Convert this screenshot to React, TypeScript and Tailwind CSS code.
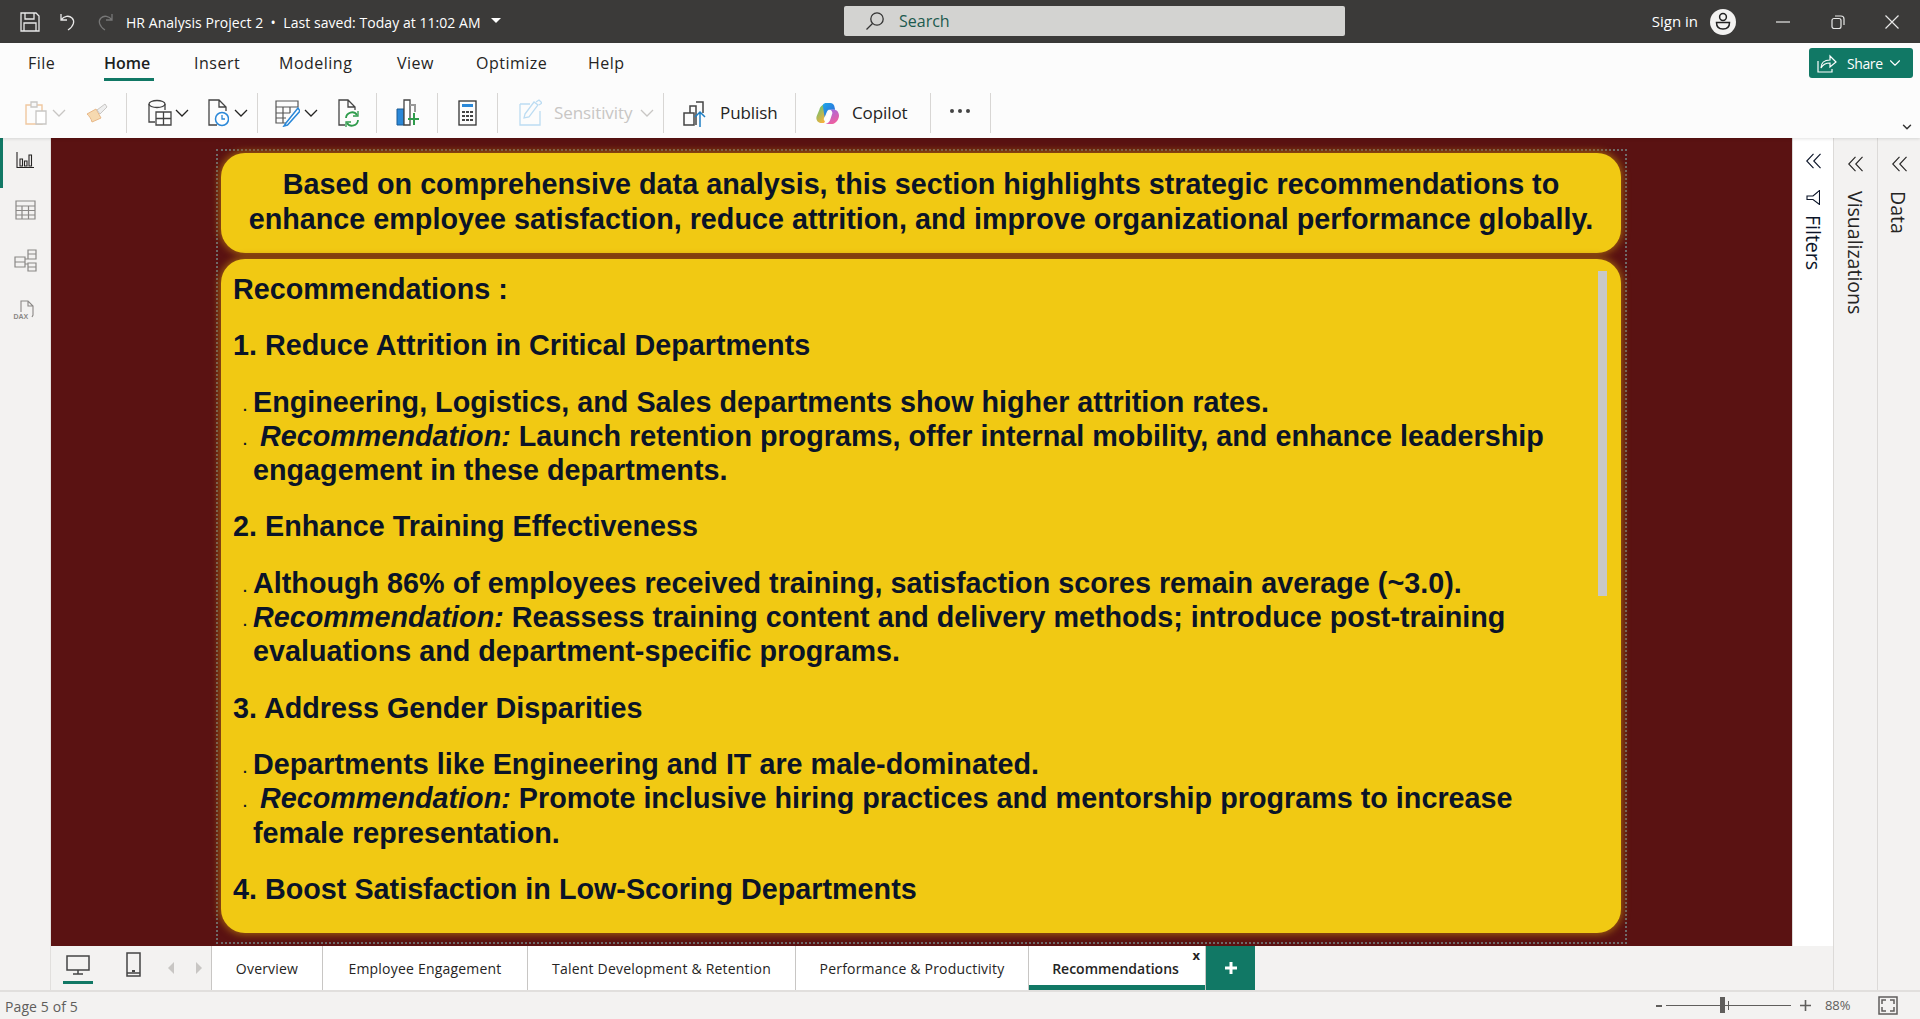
import { ChevronDown } from "lucide-react";

const uiFont = "font-['Open_Sans',sans-serif]";

function Sep({ className = "" }: { className?: string }) {
  return <div className={`w-px h-10 bg-[#d8d6d4] shrink-0 ${className}`} />;
}

function Chev({ className = "", muted = false }: { className?: string; muted?: boolean }) {
  return (
    <svg viewBox="0 0 14 8" className={`w-[14px] h-2 shrink-0 ${className}`} fill="none" stroke={muted ? "#c8c6c4" : "#252423"} strokeWidth="1.3">
      <path d="M1 1l6 6 6-6" />
    </svg>
  );
}

function TitleBar() {
  return (
    <div className="h-[43px] bg-[#3b3a39] flex items-center text-white shrink-0 relative">
      <svg viewBox="0 0 20 20" className="w-5 h-5 ml-5" fill="none" stroke="#e8e8e8" strokeWidth="1.3">
        <path d="M1 1h15l3 3v15H1z" />
        <path d="M5 1v6h9V1M4 19v-8h12v8" />
      </svg>
      <svg viewBox="0 0 18 20" className="w-[18px] h-5 ml-[19px]" fill="none" stroke="#e8e8e8" strokeWidth="1.3">
        <path d="M2 2v6h6M2 8c3-4 8-5 11-2s2 8-4 12" />
      </svg>
      <svg viewBox="0 0 18 20" className="w-[18px] h-5 ml-[19px]" fill="none" stroke="#777" strokeWidth="1.3">
        <path d="M16 2v6h-6M16 8c-3-4-8-5-11-2s-2 8 4 12" />
      </svg>
      <span className={`${uiFont} text-[14px] ml-[12px] mt-[2px] tracking-[0.05px] whitespace-nowrap`}>
        HR Analysis Project 2 &nbsp;•&nbsp; Last saved: Today at 11:02 AM
      </span>
      <svg viewBox="0 0 10 5" className="w-[10px] h-[5px] ml-[10px] mb-[2px]" fill="#fff">
        <path d="M0 0h10L5 5z" />
      </svg>
      <div className="absolute left-[844px] top-[6px] w-[501px] h-[30px] bg-[#d3d3d1] rounded-[2px] flex items-center pl-[21px]">
        <svg viewBox="0 0 20 20" className="w-5 h-5" fill="none" stroke="#333" strokeWidth="1.3">
          <circle cx="12" cy="8" r="6.2" />
          <path d="M7.5 12.5L1.5 18.5" />
        </svg>
        <span className={`${uiFont} text-[16px] ml-[14px] text-[#1c5a4e]`}>Search</span>
      </div>
      <div className="ml-auto flex items-center">
        <span className={`${uiFont} text-[15px]`}>Sign in</span>
        <svg viewBox="0 0 26 26" className="w-[26px] h-[26px] ml-[12px]">
          <circle cx="13" cy="13" r="13" fill="#f3f2f1" />
          <circle cx="13" cy="8" r="3.4" fill="none" stroke="#222" strokeWidth="1.5" />
          <path d="M6.5 13.5h13c0 4-2.5 6.5-6.5 6.5s-6.500-2.500-6.500-6.500z" fill="none" stroke="#222" strokeWidth="1.5" />
        </svg>
        <svg viewBox="0 0 14 14" className="w-[14px] h-[14px] ml-[40px]" fill="none" stroke="#e8e8e8" strokeWidth="1.2">
          <path d="M0 7h14" />
        </svg>
        <svg viewBox="0 0 14 14" className="w-[14px] h-[14px] ml-[41px]" fill="none" stroke="#e8e8e8" strokeWidth="1.2">
          <rect x="1" y="3.500" width="9" height="10" rx="2" />
          <path d="M4 1h6a3 3 0 0 1 3 3v6" />
        </svg>
        <svg viewBox="0 0 14 14" className="w-[14px] h-[14px] ml-[40px] mr-[21px]" fill="none" stroke="#e8e8e8" strokeWidth="1.200">
          <path d="M0.500 0.500l13 13M13.500 0.500l-13 13" />
        </svg>
      </div>
    </div>
  );
}

function MenuRow() {
  return (
    <div className={`${uiFont} h-[40px] flex items-start text-[16px] text-[#252423] relative tracking-[0.5px]`}>
      <span className="ml-[28px] w-[76px] mt-[8px]">File</span>
      <div className="w-[50px] mr-[40px] h-[38px] border-b-[3px] border-[#117865] pt-[8px] font-semibold text-[#201f1e] tracking-[0px]">Home</div>
      <span className="w-[85px] mt-[8px]">Insert</span>
      <span className="w-[118px] mt-[8px]">Modeling</span>
      <span className="w-[79px] mt-[8px]">View</span>
      <span className="w-[112px] mt-[8px]">Optimize</span>
      <span className="mt-[8px]">Help</span>
      <div className="ml-auto mr-[7px] mt-[5px] w-[104px] h-[30px] bg-[#117865] rounded-[3px] flex items-center text-white tracking-normal">
        <svg viewBox="0 0 20 20" className="w-5 h-5 ml-2" fill="none" stroke="#fff" strokeWidth="1.2">
          <path d="M1 8v11h14v-3" />
          <path d="M4 15c0-5 3-8 9-8V3l6 6-6 5v-4c-4 0-7 1-9 5z" />
        </svg>
        <span className="text-[14px] ml-[10px] tracking-[-0.4px]">Share</span>
        <ChevronDown size={18} strokeWidth={1.5} className="ml-[3px]" />
      </div>
    </div>
  );
}

function ToolRow() {
  return (
    <div className={`${uiFont} h-[55px] flex items-center pt-[5px] text-[17px] text-[#252423] tracking-[-0.1px]`}>
      {/* paste */}
      <svg viewBox="0 0 24 24" className="w-6 h-6 ml-6" fill="none">
        <path d="M2 4h16v19H2z" stroke="#f0c8a0" strokeWidth="1.400" />
        <path d="M7 1h6v5H7z" stroke="#c8c6c4" strokeWidth="1.300" fill="#f8f8f8" />
        <path d="M12 10h10v13H12z" stroke="#c8c6c4" strokeWidth="1.300" fill="#fff" />
      </svg>
      <Chev muted className="ml-1" />
      {/* format painter */}
      <svg viewBox="0 0 24 24" className="w-6 h-6 ml-[19px]" fill="none">
        <path d="M2 13l9-5 5 9-9 4c-1-4-3-6-5-8z" fill="#f6d9b0" stroke="#e8b888" />
        <path d="M12 9l8-6 2 3-7 7z" fill="#eee" stroke="#c8c6c4" />
      </svg>
      <div className="ml-[17px]"><Sep /></div>

      {/* get data */}
      <svg viewBox="0 0 25 28" className="w-[25px] h-7 ml-5" fill="none" stroke="#444" strokeWidth="1.300">
        <ellipse cx="10" cy="5" rx="8" ry="3.500" />
        <path d="M2 5v18h6M18 5v6" />
        <path d="M9 13h15v13H9zM9 19.500h15M16.500 13v13" fill="#fff" />
      </svg>
      <Chev className="ml-[3px]" />
      <svg viewBox="0 0 22 28" className="w-[22px] h-7 ml-[18px]" fill="none" stroke="#444" strokeWidth="1.300">
        <path d="M10 26H2V1h10l7 7v4M12 1v7h7" />
        <circle cx="15" cy="20" r="6.500" stroke="#2b88d8" strokeWidth="1.500" fill="#fff" />
        <path d="M15 16v4h3" stroke="#2b88d8" />
      </svg>
      <Chev className="ml-[5px]" />
      <div className="ml-[9px]"><Sep /></div>

      {/* transform */}
      <svg viewBox="0 0 25 28" className="w-[25px] h-7 ml-[17px]" fill="none" stroke="#555" strokeWidth="1.200">
        <path d="M1 2h22v6H1zM1 8v16h12M1 14h14M1 19h10M8 8v16M15 8v6" />
        <path d="M23 9L11 24l-2 3 3.500-1L25 12z" stroke="#2b88d8" strokeWidth="1.500" fill="#fff" />
      </svg>
      <Chev className="ml-1" />
      <svg viewBox="0 0 22 28" className="w-[22px] h-7 ml-[19px]" fill="none" stroke="#444" strokeWidth="1.300">
        <path d="M8 26H2V1h9l7 7v3M11 1v7h7" />
        <path d="M9 19a6 6 0 0 1 11-3M21 21a6 6 0 0 1-11 3" stroke="#2e9b4b" strokeWidth="1.800" />
        <path d="M21 12v5h-5M9 28v-5h5" stroke="#2e9b4b" strokeWidth="1.300" />
      </svg>
      <div className="ml-[17px]"><Sep /></div>

      {/* new visual */}
      <svg viewBox="0 0 23 28" className="w-[23px] h-7 ml-[19px]" fill="none">
        <path d="M1 10h7v16H1z" fill="#2b88d8" stroke="#1a5a95" />
        <path d="M8 1h6v25H8z" fill="#fff" stroke="#444" strokeWidth="1.300" />
        <path d="M14 6h5v7" stroke="#999" strokeWidth="2" />
        <path d="M18 14v12M12 20h11" stroke="#2e9b4b" strokeWidth="2" />
      </svg>
      <div className="ml-[18px]"><Sep /></div>

      {/* calculation */}
      <svg viewBox="0 0 19 26" className="w-[19px] h-[26px] ml-5" fill="none">
        <rect x="1" y="1" width="17" height="24" stroke="#333" strokeWidth="1.300" />
        <rect x="4" y="4" width="11" height="3" fill="#2b88d8" />
        <path d="M4 11h3v2H4zM8 11h3v2H8zM12 11h3v2h-3zM4 15h3v2H4zM8 15h3v2H8zM12 15h3v2h-3zM4 19h3v2H4zM8 19h3v2H8zM12 19h3v2h-3z" fill="#444" />
      </svg>
      <div className="ml-5"><Sep /></div>

      {/* sensitivity */}
      <svg viewBox="0 0 23 28" className="w-[23px] h-7 ml-[21px]" fill="none" stroke="#bcdcf2" strokeWidth="1.300">
        <path d="M1 5h10M1 5v21h20V12" />
        <path d="M6 15l9-12 4 3-9 12-5 1z" />
        <path d="M17 3l3-2 3 3-3 2" />
      </svg>
      <span className="ml-3 w-[79px] text-[#c8c6c4] whitespace-nowrap">Sensitivity</span>
      <Chev muted className="ml-[7px]" />
      <div className="ml-[9px]"><Sep /></div>

      {/* publish */}
      <svg viewBox="0 0 24 28" className="w-6 h-7 ml-[19px]" fill="none">
        <path d="M1 14h10v12H1z" stroke="#444" strokeWidth="1.500" />
        <path d="M7 14V7h6v19" stroke="#444" strokeWidth="1.500" />
        <path d="M13 3h7v11" stroke="#444" strokeWidth="1.500" />
        <path d="M17 28V13M12 18l5-5 5 5" stroke="#1f7fc4" strokeWidth="1.500" />
      </svg>
      <span className="ml-[13px] w-[55px] whitespace-nowrap">Publish</span>
      <div className="ml-5"><Sep /></div>

      {/* copilot */}
      <svg viewBox="0 0 24 24" className="w-[23px] h-[23px] ml-[20px]">
        <defs>
          <linearGradient id="cpa" x1="0" y1="0" x2="1" y2="1">
            <stop offset="0" stopColor="#1fa8e8" />
            <stop offset="1" stopColor="#2f62d8" />
          </linearGradient>
          <linearGradient id="cpb" x1="0" y1="0" x2="0.500" y2="1">
            <stop offset="0" stopColor="#9a6ae8" />
            <stop offset="1" stopColor="#ee5fa0" />
          </linearGradient>
          <linearGradient id="cpc" x1="0" y1="0" x2="0.600" y2="1">
            <stop offset="0" stopColor="#52c27a" />
            <stop offset="1" stopColor="#f6b23c" />
          </linearGradient>
        </defs>
        <path d="M7 3C5 4 4 6 3.500 8L1 14c-2 4 1 8 5 8h4l-2-4 3-9-3-6z" fill="url(#cpc)" />
        <path d="M7 3c1-1.500 2-2 4-2h4c2 0 3 1 4 3l1 4h-6c-1 0-2 .5-2.500 2L9 16z" fill="url(#cpa)" />
        <path d="M14 8h5c3 0 5 3 5 6 0 4-3 8-7 9h-7c3-1 4-2 5-5l2-6c.5-2-1-4-3-4z" fill="url(#cpb)" />
        <path d="M13.500 9l-2.500 9c-.5 2-1.500 3-3 4h1.500c2-.5 3-2 3.500-4l2.500-7c.3-1 0-2-2-2z" fill="#ffffff" />
      </svg>
      <span className="ml-[13px] w-[58px] whitespace-nowrap">Copilot</span>
      <div className="ml-5"><Sep /></div>

      {/* more */}
      <svg viewBox="0 0 24 6" className="w-6 h-[6px] ml-[17px] mb-1" fill="#444">
        <circle cx="4" cy="3" r="2" />
        <circle cx="12" cy="3" r="2" />
        <circle cx="20" cy="3" r="2" />
      </svg>
      <div className="ml-[18px]"><Sep /></div>

      <ChevronDown size={14} strokeWidth={2.500} className="ml-auto mr-[6px] mt-[27px] text-[#333]" />
    </div>
  );
}

function Sidebar() {
  return (
    <div className="w-[51px] shrink-0 bg-[#f3f2f1] border-r border-[#e1dfdd] flex flex-col items-center relative">
      <div className="absolute left-0 top-0 w-[3px] h-[50px] bg-[#117865]" />
      <svg viewBox="0 0 18 18" className="w-[18px] h-[18px] mt-[13px]" fill="none" stroke="#252423" strokeWidth="1.100">
        <path d="M1 1v15.500h17M4 8h2.500v7H4zM8.500 10H11v5H8.500zM13 4h2.500v11H13z" />
      </svg>
      <svg viewBox="0 0 21 20" className="w-[21px] h-5 mt-[31px]" fill="none" stroke="#8a8886" strokeWidth="1.200">
        <path d="M1 1h19v18H1zM1 6h19M1 10.500h19M1 15h19M7 6v13M13.500 6v13" />
      </svg>
      <svg viewBox="0 0 23 23" className="w-[23px] h-[23px] mt-[29px]" fill="none" stroke="#8a8886" strokeWidth="1.200">
        <path d="M1 8h10v10H1zM1 13h10M14 1h8v9h-8zM14 5h8M14 14h8v8h-8zM14 18h8M11 10h3M11 15h3" />
      </svg>
      <div className="relative w-[23px] h-[22px] mt-[28px]">
        <svg viewBox="0 0 23 22" className="w-[23px] h-[22px]" fill="none" stroke="#8a8886" strokeWidth="1.100">
          <path d="M7 12V1h7l5 5v9l-1 2M14 1v5h5" />
        </svg>
        <span className="absolute left-0 top-[12px] text-[7px] font-bold text-[#8a8886] leading-[10px] font-['Liberation_Sans',sans-serif]">DAX</span>
      </div>
    </div>
  );
}

function Bullet({ children }: { children: React.ReactNode }) {
  return (
    <li className="flex">
      <span className="w-[20px] pl-[10px] shrink-0 text-[14px] font-bold leading-[34.300px] translate-y-[4px]">.</span>
      <div>{children}</div>
    </li>
  );
}

function Rec({ children }: { children: React.ReactNode }) {
  return <em className="italic">{children}</em>;
}

function ReportCanvas() {
  return (
    <div className="flex-1 bg-[#5a1212] flex justify-center pt-[11px] min-w-0">
      <div className="w-[1411px] h-[795px] border-2 border-dotted border-[#6f6a6a] pl-[3px] pr-[4px] pt-[2px] font-['Liberation_Sans',sans-serif] font-bold text-[#0b1428]">
        <div className="h-[100px] bg-[#f1c913] rounded-[24px] shadow-[0_0_7px_2px_#98590f] flex flex-col justify-center pb-[2px] text-center text-[28.750px] leading-[35px]">
          <p>Based on comprehensive data analysis, this section highlights strategic recommendations to</p>
          <p>enhance employee satisfaction, reduce attrition, and improve organizational performance globally.</p>
        </div>
        <div className="relative mt-[6px] h-[674px] overflow-hidden bg-[#f1c913] rounded-[24px] shadow-[0_0_7px_2px_#98590f] pl-[12px] pt-[13px] text-[28.750px] leading-[34.300px]">
          <div className="flex flex-col gap-[22px]">
            <p>Recommendations :</p>
            <p>1. Reduce Attrition in Critical Departments</p>
            <ul>
              <Bullet>Engineering, Logistics, and Sales departments show higher attrition rates.</Bullet>
              <Bullet>
                <span className="pl-[7px]"><Rec>Recommendation:</Rec> Launch retention programs, offer internal mobility, and enhance leadership</span>
                <br />engagement in these departments.
              </Bullet>
            </ul>
            <p>2. Enhance Training Effectiveness</p>
            <ul>
              <Bullet>Although 86% of employees received training, satisfaction scores remain average (~3.0).</Bullet>
              <Bullet>
                <Rec>Recommendation:</Rec> Reassess training content and delivery methods; introduce post-training
                <br />evaluations and department-specific programs.
              </Bullet>
            </ul>
            <p>3. Address Gender Disparities</p>
            <ul>
              <Bullet>Departments like Engineering and IT are male-dominated.</Bullet>
              <Bullet>
                <span className="pl-[7px]"><Rec>Recommendation:</Rec> Promote inclusive hiring practices and mentorship programs to increase</span>
                <br />female representation.
              </Bullet>
            </ul>
            <p>4. Boost Satisfaction in Low-Scoring Departments</p>
          </div>
          <div className="absolute right-[14px] top-[12px] w-[9px] h-[325px] bg-[#c8c8c8]" />
        </div>
      </div>
    </div>
  );
}

function DoubleChevron({ className = "" }: { className?: string }) {
  return (
    <svg viewBox="0 0 16 16" className={`w-[15px] h-4 ${className}`} fill="none" stroke="currentColor" strokeWidth="1.200">
      <path d="M8 .5L.8 8 8 15.500M15.500 .5L8.300 8l7.200 7.500" />
    </svg>
  );
}

function SidePanel({ label, white = false, width, children }: { label: string; white?: boolean; width: string; children?: React.ReactNode }) {
  return (
    <div className={`${width} shrink-0 border-l border-[#dcdad8] flex flex-col items-center ${white ? "bg-white text-[#0b1428]" : "bg-[#f3f2f1] text-[#252423]"}`}>
      <DoubleChevron className={white ? "mt-[15px]" : "mt-[18px]"} />
      {children}
      <span className={`${uiFont} text-[19.500px] leading-[24px] [writing-mode:vertical-rl] ${white ? "mt-[10px]" : "mt-[19px] pr-[2px]"}`}>{label}</span>
    </div>
  );
}

function PageTabs() {
  const tabs = [
    { name: "Overview", w: "w-[111px]" },
    { name: "Employee Engagement", w: "w-[205px]" },
    { name: "Talent Development & Retention", w: "w-[268px]" },
    { name: "Performance & Productivity", w: "w-[233px]" },
  ];
  return (
    <div className={`${uiFont} h-[44px] shrink-0 bg-[#f3f2f1] flex text-[14px] text-[#252423] tracking-[0.2px]`}>
      <div className="w-[160px] shrink-0 flex items-start">
        <div className="ml-[12px] w-[30px] h-[38px] border-b-[3px] border-[#117865] flex justify-center pt-[9px]">
          <svg viewBox="0 0 24 20" className="w-6 h-5" fill="none" stroke="#444" strokeWidth="1.500">
            <path d="M1 1h22v14H1zM12 15v4M7 19h10" />
          </svg>
        </div>
        <svg viewBox="0 0 15 25" className="w-[15px] h-[25px] ml-[33px] mt-[6px]" fill="none" stroke="#444" strokeWidth="1.500">
          <path d="M1 1h13v23H1zM1 21h13" />
          <path d="M6 18h3v2H6z" fill="#444" stroke="none" />
        </svg>
        <svg viewBox="0 0 6 12" className="w-[6px] h-3 ml-[27px] mt-[16px]" fill="#c8c6c4">
          <path d="M6 0v12L0 6z" />
        </svg>
        <svg viewBox="0 0 6 12" className="w-[6px] h-3 ml-[22px] mt-[16px]" fill="#c8c6c4">
          <path d="M0 0v12l6-6z" />
        </svg>
      </div>
      <div className="flex bg-white border-l border-[#c8c6c4]">
        {tabs.map((t) => (
          <div key={t.name} className={`${t.w} border-r border-[#c8c6c4] flex items-center justify-center whitespace-nowrap`}>
            {t.name}
          </div>
        ))}
      </div>
      <div className="w-[176px] bg-white border-b-[5px] border-[#117865] relative flex items-center justify-center font-semibold pt-[5px] pr-[3px] tracking-normal">
        Recommendations
        <span className="absolute right-[5px] top-0 text-[13px] font-bold leading-[18px]">x</span>
      </div>
      <div className="w-[50px] bg-[#117865] border-l border-[#c8c6c4] flex items-center justify-center">
        <svg viewBox="0 0 12 12" className="w-3 h-3" fill="none" stroke="#fff" strokeWidth="3">
          <path d="M6 0v12M0 6h12" />
        </svg>
      </div>
    </div>
  );
}

function StatusBar() {
  return (
    <div className={`${uiFont} h-[29px] shrink-0 bg-[#f3f2f1] border-t-2 border-[#e1dfdd] flex items-center text-[14px] text-[#605e5c]`}>
      <span className="ml-[5px] tracking-[0.1px] mt-[1px]">Page 5 of 5</span>
      <div className="ml-auto flex items-center mr-[22px]">
        <div className="w-[6px] h-[2px] bg-[#605e5c]" />
        <div className="relative w-[125px] h-px bg-[#605e5c] ml-[4px]">
          <div className="absolute left-[54px] -top-[8px] w-[5px] h-[16px] bg-[#605e5c]" />
          <div className="absolute left-[62px] -top-[4px] w-px h-[9px] bg-[#605e5c]" />
        </div>
        <svg viewBox="0 0 11 11" className="w-[11px] h-[11px] ml-[9px]" fill="none" stroke="#605e5c" strokeWidth="1.600">
          <path d="M5.500 0v11M0 5.500h11" />
        </svg>
        <span className="ml-[14px] w-[38px] text-[13px] tracking-[-0.1px]">88%</span>
        <svg viewBox="0 0 20 19" className="w-5 h-[19px] ml-[15px]" fill="none" stroke="#605e5c" strokeWidth="1.500">
          <path d="M1 1h18v17H1z" />
          <path d="M4 8V4h4M12 4h4v4M16 11v4h-4M8 15H4v-4" />
        </svg>
      </div>
    </div>
  );
}

export default function App() {
  return (
    <div className="w-[1920px] h-[1019px] flex flex-col overflow-hidden bg-white">
      <TitleBar />
      <div className="h-[95px] shrink-0 bg-[#fcfcfc] shadow-[0_1px_3px_rgba(0,0,0,0.12)] z-10">
        <MenuRow />
        <ToolRow />
      </div>
      <div className="flex-1 flex min-h-0">
        <Sidebar />
        <div className="flex-1 flex flex-col min-w-0">
          <div className="flex-1 flex min-h-0">
            <ReportCanvas />
            <SidePanel label="Filters" white width="w-[41px]">
              <svg viewBox="0 0 14 15" className="w-[14px] h-[15px] mt-[21px]" fill="none" stroke="#0b1428" strokeWidth="1.100">
                <path d="M13.500 .5v14L7 9.500H1V6h6z" />
              </svg>
            </SidePanel>
          </div>
          <PageTabs />
        </div>
        <SidePanel label="Visualizations" width="w-[44px]" />
        <SidePanel label="Data" width="w-[43px]" />
      </div>
      <StatusBar />
    </div>
  );
}
